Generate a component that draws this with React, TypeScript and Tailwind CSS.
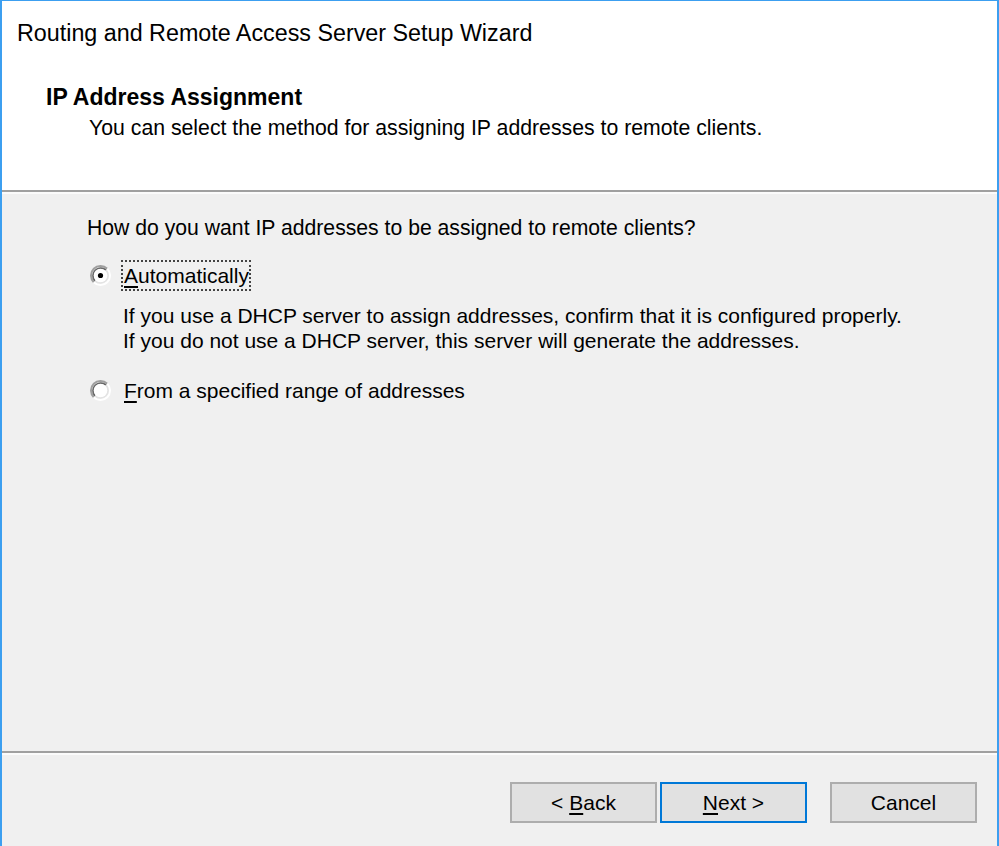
import React from 'react'

function Radio({ checked }: { checked?: boolean }) {
  return (
    <svg width="21" height="21" viewBox="0 0 21 21" className="shrink-0">
      <path d="M3.78 17.22 A9.5 9.5 0 0 1 17.22 3.78" fill="none" stroke="#a0a0a0" strokeWidth="2" />
      <path d="M17.22 3.78 A9.5 9.5 0 0 1 3.78 17.22" fill="none" stroke="#ffffff" strokeWidth="2" />
      <path d="M5.06 15.94 A7.7 7.7 0 0 1 15.94 5.06" fill="none" stroke="#696969" strokeWidth="1.8" />
      <path d="M15.94 5.06 A7.7 7.7 0 0 1 5.06 15.94" fill="none" stroke="#e3e3e3" strokeWidth="1.8" />
      <circle cx="10.5" cy="10.5" r="6.8" fill="#ffffff" />
      {checked && <circle cx="10.5" cy="10.5" r="2.6" fill="#000000" />}
    </svg>
  )
}

function Key({ children }: { children: React.ReactNode }) {
  return <span className="underline decoration-[1.5px] underline-offset-[3px]">{children}</span>
}

function Button({ children, primary }: { children: React.ReactNode; primary?: boolean }) {
  return (
    <button
      className={
        primary
          ? 'w-[147px] h-[41px] bg-[#e1e1e1] border-2 border-[#0078d7] text-[21px] leading-[24px] text-black'
          : 'w-[147px] h-[41px] bg-[#e1e1e1] border-2 border-[#adadad] text-[21px] leading-[24px] text-black'
      }
    >
      {children}
    </button>
  )
}

export default function App() {
  return (
    <div className="w-[999px] h-[846px] flex flex-col border-l-2 border-r-2 border-t border-[#3c9ff0] bg-[#f0f0f0] text-black font-['Liberation_Sans',Arial,sans-serif]">
      {/* header */}
      <div className="h-[189px] bg-white flex flex-col">
        <div className="pt-[18px] pl-[15px] text-[23.3px] leading-[28px]">
          Routing and Remote Access Server Setup Wizard
        </div>
        <div className="mt-[37px] pl-[44px] text-[23px] leading-[26px] font-bold">IP Address Assignment</div>
        <div className="mt-[6px] pl-[87px] text-[21.25px] leading-[24px]">
          You can select the method for assigning IP addresses to remote clients.
        </div>
      </div>
      <div className="h-[2px] bg-[#a0a0a0]" />
      <div className="h-[2px] bg-[#fbfbfb]" />

      {/* body */}
      <div className="flex-1 pl-[85px] text-[21px] leading-[24px]">
        <div className="mt-[22px] text-[21.2px]">How do you want IP addresses to be assigned to remote clients?</div>

        <div className="mt-[20px] flex items-center">
          <div className="ml-[2.5px] mr-[10.5px] flex">
            <Radio checked />
          </div>
          <div className="h-[31px] border-2 border-dotted border-[#444] pt-[2px] pl-[1px] pr-0">
            <Key>A</Key>utomatically
          </div>
        </div>
        <div className="mt-[12px] pl-[36px] leading-[25px]">
          <div>If you use a DHCP server to assign addresses, confirm that it is configured properly.</div>
          <div>If you do not use a DHCP server, this server will generate the addresses.</div>
        </div>

        <div className="mt-[22px] flex items-center">
          <div className="ml-[2.5px] mr-[10.5px] flex">
            <Radio />
          </div>
          <div className="h-[31px] border-2 border-transparent pt-[2px] pl-[1px]">
            <Key>F</Key>rom a specified range of addresses
          </div>
        </div>
      </div>

      <div className="h-[2px] bg-[#a0a0a0]" />
      <div className="h-[2px] bg-[#fbfbfb]" />

      {/* footer */}
      <div className="h-[91px] flex justify-end items-start pt-[27px] pr-[20px]">
        <div className="flex gap-[3px]">
          <Button>
            &lt; <Key>B</Key>ack
          </Button>
          <Button primary>
            <Key>N</Key>ext &gt;
          </Button>
        </div>
        <div className="ml-[23px]">
          <Button>Cancel</Button>
        </div>
      </div>
    </div>
  )
}
